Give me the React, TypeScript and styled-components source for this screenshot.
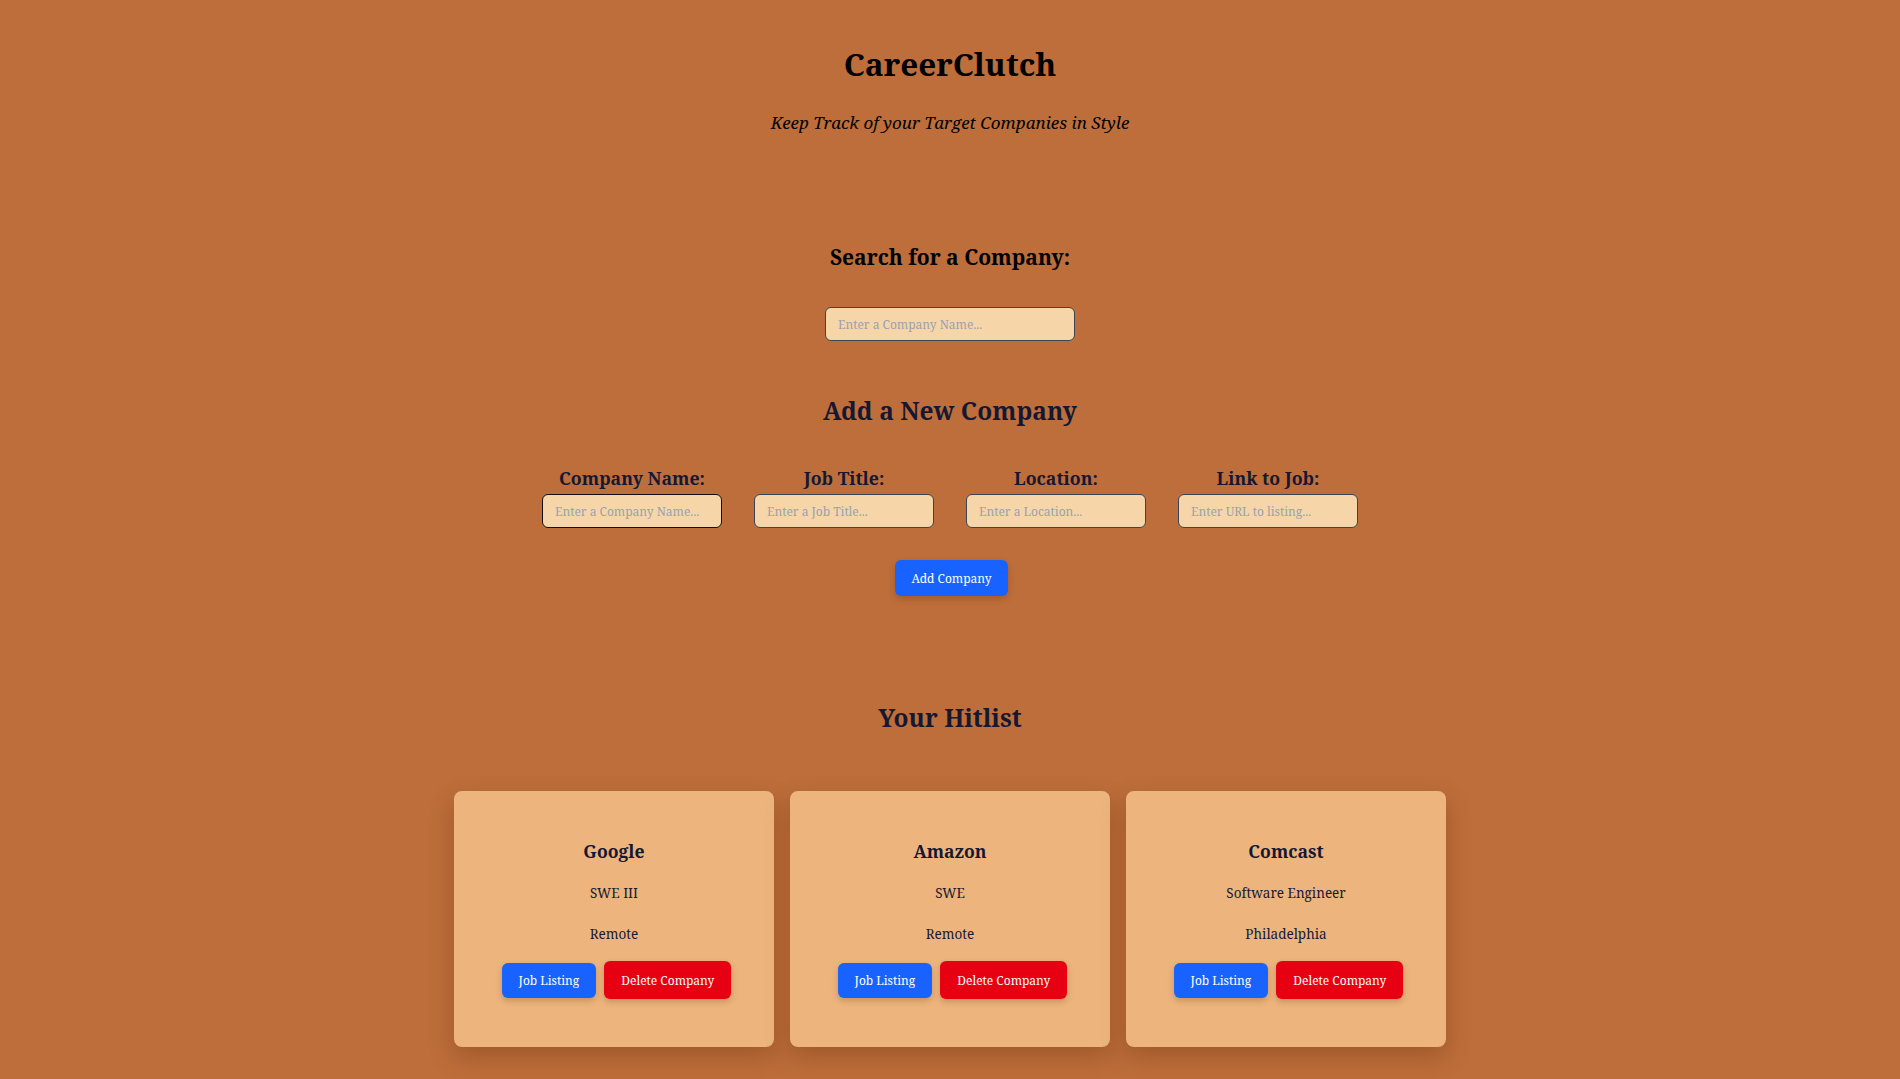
import React from "react";
import styled, { createGlobalStyle } from "styled-components";

const GlobalStyle = createGlobalStyle`
  html, body {
    margin: 0;
    padding: 0;
    background: #bd6e3a;
  }
  body {
    font-family: "Noto Serif", "DejaVu Serif", "Liberation Serif", serif;
    color: #000;
  }
  * { box-sizing: border-box; }
`;

const Page = styled.div`
  min-height: 1079px;
  display: flex;
  flex-direction: column;
  align-items: center;
  padding-top: 44px;
`;

const Title = styled.h1`
  margin: 0;
  font-size: 31.5px;
  line-height: 40px;
  font-weight: 700;
  color: #000;
`;

const Subtitle = styled.p`
  margin: 27px 0 0;
  font-size: 17px;
  line-height: 24px;
  font-style: italic;
`;

const Heading = styled.h2<{ $top: number; $size: number; $line: number; $color?: string }>`
  margin: ${(p) => p.$top}px 0 0;
  font-size: ${(p) => p.$size}px;
  line-height: ${(p) => p.$line}px;
  font-weight: 700;
  color: ${(p) => p.$color || "#000"};
`;

const Input = styled.input<{ $focused?: boolean }>`
  width: ${(p) => (p.$focused !== undefined ? 180 : 250)}px;
  height: 34px;
  padding: 0 12px;
  border-radius: 6px;
  border: ${(p) => (p.$focused ? "1.5px solid #111" : "1px solid #3b4454")};
  background: #f6d6a8;
  font-family: inherit;
  font-size: 12px;
  color: #1f2937;
  outline: none;
  &::placeholder {
    color: #98a1b3;
  }
`;

const SearchInput = styled(Input)`
  margin-top: 36px;
`;

const FieldRow = styled.div`
  display: flex;
  gap: 32px;
  margin-top: 38px;
`;

const Field = styled.label`
  display: flex;
  flex-direction: column;
  align-items: center;
  gap: 4px;
  width: 180px;
`;

const FieldLabel = styled.span`
  font-size: 17.7px;
  line-height: 24px;
  font-weight: 700;
  color: #161833;
`;

const Button = styled.button<{ $variant: "blue" | "red" }>`
  border: none;
  border-radius: 6px;
  padding: 0 17px;
  height: ${(p) => (p.$variant === "red" ? 38 : 35)}px;
  background: ${(p) => (p.$variant === "red" ? "#e60012" : "#1862ff")};
  color: #fff;
  font-family: inherit;
  font-size: 12px;
  cursor: pointer;
  box-shadow: 0 3px 6px rgba(90, 40, 10, 0.25);
`;

const AddButton = styled(Button)`
  margin-top: 32px;
  margin-left: 3px;
  height: 36px;
  width: 113px;
  padding: 0;
`;

const CardGrid = styled.div`
  display: grid;
  grid-template-columns: repeat(3, 320px);
  gap: 16px;
  margin-top: 56px;
  margin-bottom: 32px;
`;

const Card = styled.div`
  height: 256px;
  background: #edb57d;
  border-radius: 8px;
  box-shadow: 0 10px 25px rgba(90, 40, 10, 0.3);
  display: flex;
  flex-direction: column;
  align-items: center;
  padding-top: 48px;
  color: #161833;
`;

const CardTitle = styled.h3`
  margin: 0;
  font-size: 17.6px;
  line-height: 24px;
  font-weight: 700;
`;

const CardText = styled.p<{ $top: number }>`
  margin: ${(p) => p.$top}px 0 0;
  font-size: 13.5px;
  line-height: 20px;
`;

const CardActions = styled.div`
  display: flex;
  align-items: center;
  gap: 8px;
  margin-top: 17px;
  margin-left: 5px;
`;

const companies = [
  { name: "Google", title: "SWE III", location: "Remote" },
  { name: "Amazon", title: "SWE", location: "Remote" },
  { name: "Comcast", title: "Software Engineer", location: "Philadelphia" },
];

export default function App() {
  return (
    <>
      <GlobalStyle />
      <Page>
        <Title>CareerClutch</Title>
        <Subtitle>Keep Track of your Target Companies in Style</Subtitle>

        <Heading $top={108} $size={21} $line={28}>Search for a Company:</Heading>
        <SearchInput placeholder="Enter a Company Name..." />

        <Heading $top={53} $size={24.5} $line={34} $color="#161833">Add a New Company</Heading>
        <FieldRow>
          <Field>
            <FieldLabel>Company Name:</FieldLabel>
            <Input $focused placeholder="Enter a Company Name..." />
          </Field>
          <Field>
            <FieldLabel>Job Title:</FieldLabel>
            <Input $focused={false} placeholder="Enter a Job Title..." />
          </Field>
          <Field>
            <FieldLabel>Location:</FieldLabel>
            <Input $focused={false} placeholder="Enter a Location..." />
          </Field>
          <Field>
            <FieldLabel>Link to Job:</FieldLabel>
            <Input $focused={false} placeholder="Enter URL to listing..." />
          </Field>
        </FieldRow>
        <AddButton $variant="blue">Add Company</AddButton>

        <Heading $top={105} $size={24.5} $line={34} $color="#161833">Your Hitlist</Heading>
        <CardGrid>
          {companies.map((c) => (
            <Card key={c.name}>
              <CardTitle>{c.name}</CardTitle>
              <CardText $top={20}>{c.title}</CardText>
              <CardText $top={21}>{c.location}</CardText>
              <CardActions>
                <Button $variant="blue">Job Listing</Button>
                <Button $variant="red">Delete Company</Button>
              </CardActions>
            </Card>
          ))}
        </CardGrid>
      </Page>
    </>
  );
}
